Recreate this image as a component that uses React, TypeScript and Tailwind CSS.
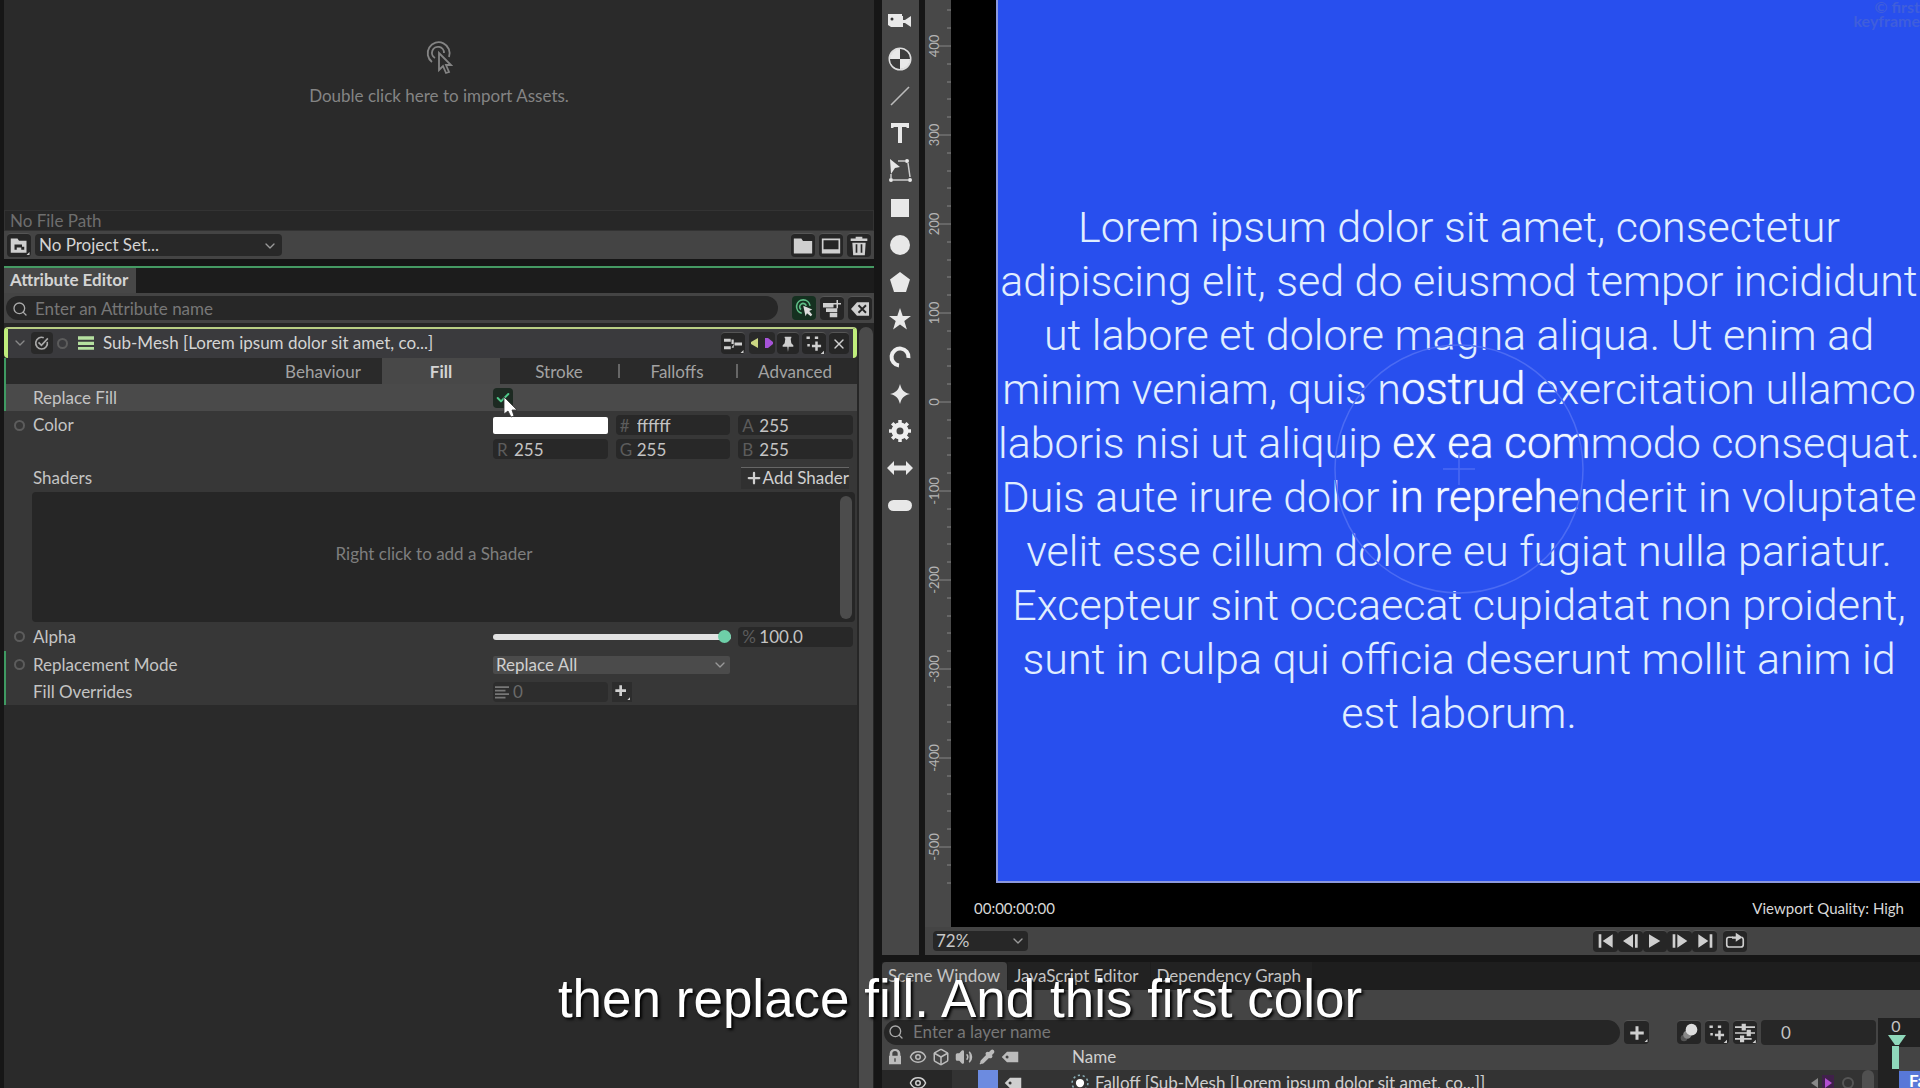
import type { ReactNode } from "react";
import { ChevronDown, Eye, Box, Volume2, Pipette, X, Plus, Search, Check } from "lucide-react";

const TABS = ["Behaviour", "Fill", "Stroke", "Falloffs", "Advanced"];

const SCENE_TABS = ["Scene Window", "JavaScript Editor", "Dependency Graph"];

const RULER_LABELS = [400, 300, 200, 100, 0, -100, -200, -300, -400, -500];

const TOOLS: { name: string; icon: ReactNode }[] = [
  { name: "Camera", icon: <><path d="M0 6V4h14v2h1v11H3l-3-2z" /><path d="M15 10h2l6-4v11l-6-4h-2z" /><circle cx="4" cy="9" r="1.500" fill="#333" /></> },
  { name: "Null", icon: <><circle cx="12" cy="12" r="10.5" fill="#555" stroke="#ddd" strokeWidth="2" /><path d="M12 12h10a10 10 0 0 0-10-10zM12 12H2a10 10 0 0 0 10 10z" fill="#3c3c3c" /><path d="M12 12V2A10 10 0 0 0 2 12zM12 12v10a10 10 0 0 0 10-10z" /></> },
  { name: "Line", icon: <path d="M3 21 21 3" stroke="#bbb" strokeWidth="1.6" /> },
  { name: "Text", icon: <path d="M3 2h18v5h-2l-1-1h-4v16h-4V6H6L5 7H3z" /> },
  { name: "Edit Points", icon: <><path d="m2 1 10 8-5 1-4 6z" /><path d="M10 3h7M20 5l2 14M5 22h15M3 20v-4" stroke="#ccc" strokeWidth="1.5" fill="none" /><circle cx="19" cy="3" r="2" /><circle cx="22" cy="22" r="2" /><circle cx="3" cy="22" r="2" /></> },
  { name: "Rectangle", icon: <path d="M3 3h18v18H3z" /> },
  { name: "Ellipse", icon: <circle cx="12" cy="12" r="10" /> },
  { name: "Polygon", icon: <path d="m12 2 10 7.500-4 12.500H6L2 9.500z" /> },
  { name: "Star", icon: <path d="m12 1 2.700 8H23l-6.700 5 2.600 8.500L12 17.400 5.100 22.500 7.700 14 1 9h8.300z" /> },
  { name: "Arc", icon: <path d="M20.500 13A8.500 8.500 0 1 0 11 20.500" fill="none" stroke="#eee" strokeWidth="4" /> },
  { name: "Super Ellipse", icon: <path d="M12 2c1.500 6 4 8.500 10 10-6 1.500-8.500 4-10 10-1.500-6-4-8.500-10-10 6-1.500 8.500-4 10-10z" /> },
  { name: "Cogwheel", icon: <><circle cx="12" cy="12" r="6" fill="none" stroke="#eee" strokeWidth="5" /><path d="M12 1v4M12 19v4M1 12h4M19 12h4M4.200 4.200 7 7M17 17l2.800 2.800M4.200 19.800 7 17M17 7l2.800-2.800" stroke="#eee" strokeWidth="3.500" /></> },
  { name: "Arrow", icon: <path d="m-1 12 7-7v4.500h12V5l7 7-7 7v-4.500H6V19z" /> },
  { name: "Capsule", icon: <rect x="0" y="7" width="24" height="11" rx="5.500" /> },
];

function IconButton({ label, children, className = "w-6 h-6" }: { label: string; children: ReactNode; className?: string }) {
  return (
    <button aria-label={label} className={`flex items-center justify-center shrink-0 rounded-sm border-t border-[#555] bg-[#262626] text-[#cfcfcf] ${className}`}>
      {children}
    </button>
  );
}

function Glyph({ children, className = "w-5 h-5" }: { children: ReactNode; className?: string }) {
  return (
    <svg viewBox="0 0 24 24" className={`overflow-visible ${className}`} fill="currentColor">
      {children}
    </svg>
  );
}

function Tag() {
  return (
    <Glyph className="w-[18px] h-[18px]">
      <path fillRule="evenodd" d="M8 5h15v14H8l-7-7zM8 10a2 2 0 1 0 .1 4 2 2 0 0 0 0-4z" />
    </Glyph>
  );
}

function Pattern() {
  return (
    <Glyph>
      <rect x="3" y="3" width="4" height="3" /><rect x="13" y="3" width="4" height="3" /><rect x="4" y="12" width="3" height="3" />
      <path d="M13.500 9h3v4h4v3h-4v4h-3v-4h-4v-3h4zM24 20v4h-4z" />
    </Glyph>
  );
}

function NumberField({ prefix, value, id }: { prefix: string; value: string; id: string }) {
  return (
    <div className="flex items-center h-5 bg-[#282828] rounded-sm pl-1 pt-px">
      <label htmlFor={id} className="w-[17px] shrink-0 text-[#5c5c5c]">{prefix}</label>
      <input id={id} defaultValue={value} className="w-full min-w-0 bg-transparent outline-none text-[#c4c4c4]" />
    </div>
  );
}

function Row({ label, keyable, edited, active, className = "h-[27px]", htmlFor, children }: {
  label: string; keyable?: boolean; edited?: boolean; active?: boolean; className?: string; htmlFor?: string; children?: ReactNode;
}) {
  return (
    <div className={`flex items-center border-l-2 pr-1 ${edited ? "border-[#3f9a62]" : "border-transparent"} ${active ? "bg-[#4a4a4a]" : ""} ${className}`}>
      <div className="flex items-center w-[27px] pl-2 shrink-0">
        {keyable && <span className="w-[11px] h-[11px] rounded-full border-2 border-[#5c5c5c]" />}
      </div>
      <label htmlFor={htmlFor} className="flex-1 text-[#c4c4c4]">{label}</label>
      <div className="w-[360px]">{children}</div>
    </div>
  );
}

function AssetsPanel() {
  return (
    <section className="bg-[#444] h-[259px] flex flex-col">
      <div className="flex-1 bg-[#2a2a2a] flex flex-col items-center text-[#848484] pt-10">
        <svg viewBox="0 0 28 36" className="w-7 h-9" fill="none" stroke="currentColor" strokeWidth="1.800">
          <path d="M7 22A11 11 0 1 1 24 17" />
          <path d="M10 18a6 6 0 1 1 9-5" />
          <path d="M14 13v17l4-4 3 7 3-1-3-7h5z" fill="#2a2a2a" />
        </svg>
        <p className="mt-2.5">Double click here to import Assets.</p>
      </div>
      <div className="h-[21px] bg-[#272727] border border-[#333] px-[5px] flex items-center text-[#6e6e6e]">No File Path</div>
      <div className="h-7 flex items-center pl-[3px] pr-[3px]">
        <IconButton label="Set project">
          <Glyph className="w-[18px] h-[18px]">
            <path fillRule="evenodd" d="M1 2h9l2 3h10v16H1zM6 10v7h3v-3h6v3h4v-4h-3v-3z" /><path d="M26 20v4h-4z" />
          </Glyph>
        </IconButton>
        <div className="relative ml-1 w-[247px]">
          <select aria-label="Project" className="w-full h-[22px] appearance-none bg-[#282828] rounded-sm pl-1 outline-none text-[#d4d4d4]">
            <option>No Project Set...</option>
          </select>
          <ChevronDown className="absolute right-1 top-1 w-4 h-4 text-[#999] pointer-events-none" />
        </div>
        <div className="ml-auto flex gap-1">
          <IconButton label="New folder"><Glyph><path d="M1 3h9l2 3h11v15H1z" /></Glyph></IconButton>
          <IconButton label="New composition"><Glyph><path fillRule="evenodd" d="M1 3h22v18H1zM3 5v11h18V5z" /></Glyph></IconButton>
          <IconButton label="Delete"><Glyph><path fillRule="evenodd" d="M8 1h8v2h6v3H2V3h6zM4 8h16l-1 15H5zM8 10v10h2V10zm6 0v10h2V10z" /></Glyph></IconButton>
        </div>
      </div>
    </section>
  );
}

function AttributeEditor() {
  return (
    <section className="flex-1 flex flex-col bg-[#2a2a2a]">
      <div className="h-[27px] border-t-2 border-[#459a63] bg-[#1c1c1c] flex">
        <h2 className="bg-[#474747] text-[#d4d4d4] pl-1.5 pr-2 pb-px flex items-center font-bold">Attribute Editor</h2>
      </div>
      <div className="h-[30px] bg-[#444] flex items-center gap-1 px-0.5">
        <label className="flex-1 h-6 rounded-full bg-[#272727] flex items-center gap-[7px] pl-1.5 mr-2.5 pt-px">
          <Search className="w-4 h-4 text-[#aaa] shrink-0" />
          <input placeholder="Enter an Attribute name" className="flex-1 bg-transparent outline-none placeholder:text-[#777]" />
        </label>
        <button aria-label="Auto select" className="w-6 h-6 rounded-sm bg-[#153020] flex items-center justify-center text-[#5fbf87]">
          <Glyph className="w-[18px] h-[18px]">
            <path d="M9 19A9 9 0 1 1 20 9M8 14a4.500 4.500 0 1 1 7-5" fill="none" stroke="currentColor" strokeWidth="2.200" />
            <path d="m11 9 12 5-4 2 4 5-2 2-5-4-2 4z" fill="#ddd" />
          </Glyph>
        </button>
        <IconButton label="Add to list">
          <Glyph className="w-[18px] h-[18px]"><path d="M0 4h14v6H0zM4 11h15v5H4zM9 17h10v6H9zM18 0h2v4h4v2h-4v5h-2V6h-4V4h4z" /></Glyph>
        </IconButton>
        <IconButton label="Clear">
          <Glyph className="w-[18px] h-[18px]"><path d="M8 3h16v18H8l-8-9z" /><path d="m10 7 10 10M20 7 10 17" stroke="#262626" strokeWidth="2.500" /></Glyph>
        </IconButton>
      </div>

      <div className="flex-1 flex pt-1 bg-[#262626]">
        <div className="flex-1 flex flex-col bg-[#2a2a2a]">
          {/* Layer header */}
          <div className="h-[31px] border-t-2 border-t-[#b9cf85] border-x-4 border-x-[#c0ee7c] bg-[#3a3a3d] rounded-sm flex items-center pl-1 pb-px">
            <ChevronDown className="w-4 h-4 text-[#888]" />
            <button aria-label="Enabled" className="w-[22px] h-[22px] ml-[3px] bg-[#292929] rounded-sm flex items-center justify-center text-[#aaa]">
              <Glyph className="w-3.5 h-3.5">
                <path d="M21 10a10 10 0 1 1-6-7M6 11l5 5L22 4" fill="none" stroke="currentColor" strokeWidth="2.800" />
              </Glyph>
            </button>
            <span className="w-[11px] h-[11px] rounded-full border-2 border-[#5c5c5c] ml-1" />
            <Glyph className="w-4 h-4 ml-2.5 text-[#b5e0a0]">
              <path d="M0 2h24v5H0zM0 10h24v5H0zM0 18h24v4H0z" />
            </Glyph>
            <h3 className="ml-[9px] flex-1 text-[#d4d4d4]">Sub-Mesh [Lorem ipsum dolor sit amet, co...]</h3>
            <IconButton label="Connections" className="w-6 h-[22px]">
              <Glyph className="w-[18px] h-[18px]"><path d="M0 5h9v4H0zM0 15h9v4H0zM14 10h10v4H14zM10 6h3v6h-3M10 17h3v-5" /><path d="M26 20v4h-4z" /></Glyph>
            </IconButton>
            <button aria-label="Keyframe navigation" className="ml-1 mr-0.5 w-[26px] h-[22px] bg-[#292929] rounded-sm flex items-center justify-center">
              <svg viewBox="0 0 24 12" className="w-6 h-3">
                <path d="M8 1v10L1 7V5z" fill="#cbd682" /><path d="M15 1v10h3l5-4V5l-5-4z" fill="#a653d8" />
              </svg>
            </button>
            <IconButton label="Pin" className="w-[22px] h-[22px]">
              <Glyph className="w-4 h-4"><path d="M7 1h10v2l-1 1 1 7 3 3v2h-7l-1 8-1-8H4v-2l3-3 1-7-1-1z" /></Glyph>
            </IconButton>
            <IconButton label="Presets" className="w-6 h-[22px] ml-[3px]"><Pattern /></IconButton>
            <IconButton label="Close" className="w-5 h-[22px] ml-[3px] mr-1"><X className="w-4 h-4" /></IconButton>
          </div>

          <nav className="h-[26px] border-l-2 border-[#3f9a62] flex justify-end pr-[3px]">
            {TABS.map((tab) => (
              <button
                key={tab}
                className={`w-[118px] pt-px ${tab === "Fill" ? "bg-[#484848] text-[#d4d4d4] font-bold" : "text-[#a2a2a2]"} ${tab === "Falloffs" || tab === "Advanced" ? "relative before:absolute before:left-0 before:top-1.5 before:h-3.5 before:w-0.5 before:bg-[#666]" : ""}`}
              >
                {tab}
              </button>
            ))}
          </nav>

          {/* Attributes */}
          <div className="bg-[#373737]">
            <Row label="Replace Fill" htmlFor="replace-fill" edited active>
              <div className="relative w-5 h-5">
                <input id="replace-fill" type="checkbox" defaultChecked className="block appearance-none w-5 h-5 rounded-sm bg-[#1d2a22]" />
                <Check className="absolute left-0.5 top-0.5 w-4 h-4 text-[#4fc98a] pointer-events-none" strokeWidth={3} />
                <svg viewBox="0 0 14 22" className="absolute left-2.5 top-2 w-3.5 h-[22px]">
                  <path d="M1 1v17l4-3 3 6 3-1-2-6h5z" fill="#fff" stroke="#333" strokeWidth="0.800" />
                </svg>
              </div>
            </Row>
            <Row label="Color" htmlFor="hex" keyable className="h-[28px]">
              <div className="grid grid-cols-3 gap-x-2 items-center">
                <button aria-label="Color swatch" className="h-[17px] rounded-xs bg-white" />
                <NumberField id="hex" prefix="#" value="ffffff" />
                <NumberField id="alpha-channel" prefix="A" value="255" />
              </div>
            </Row>
            <div className="h-[24px] flex justify-end pr-1">
              <div className="w-[360px] grid grid-cols-3 gap-x-2">
                <NumberField id="red" prefix="R" value="255" />
                <NumberField id="green" prefix="G" value="255" />
                <NumberField id="blue" prefix="B" value="255" />
              </div>
            </div>
            <Row label="Shaders" className="h-[29px]">
              <button className="ml-auto mr-1 h-[22px] flex items-center border-t border-[#666] bg-[#303030] pl-1 text-[#d0d0d0]">
                <Plus className="w-[18px] h-[18px]" strokeWidth={3} />
                <span>Add Shader</span>
              </button>
            </Row>
            <div className="ml-7 mr-0.5 h-[130px] bg-[#262626] rounded-sm flex items-center pr-[3px]">
              <p className="flex-1 text-center text-[#7e7e7e] -mt-1.5 pr-1">Right click to add a Shader</p>
              <div className="w-3 h-[123px] rounded-full bg-[#4c4c4c]" />
            </div>
            <Row label="Alpha" htmlFor="alpha" keyable className="h-[29px]">
              <div className="grid grid-cols-3 gap-x-2 items-center">
                <input
                  id="alpha"
                  type="range"
                  defaultValue={100}
                  className="col-span-2 w-[238px] h-1.5 appearance-none rounded-full bg-[#e2e2e2] [&::-webkit-slider-thumb]:appearance-none [&::-webkit-slider-thumb]:w-[13px] [&::-webkit-slider-thumb]:h-[13px] [&::-webkit-slider-thumb]:rounded-full [&::-webkit-slider-thumb]:bg-[#6ecfa8]"
                />
                <NumberField id="alpha-value" prefix="%" value="100.0" />
              </div>
            </Row>
            <Row label="Replacement Mode" htmlFor="mode" keyable edited>
              <div className="relative w-[237px]">
                <select id="mode" className="block w-full h-[18px] appearance-none bg-[#4b4b4b] rounded-xs pl-[3px] outline-none text-[#d0d0d0] leading-[18px]">
                  <option>Replace All</option>
                </select>
                <ChevronDown className="absolute right-0.5 top-px w-4 h-4 text-[#999] pointer-events-none" />
              </div>
            </Row>
            <Row label="Fill Overrides" htmlFor="overrides" edited>
              <div className="flex items-center gap-1">
                <div className="flex items-center w-[115px] h-5 bg-[#2d2d2d] rounded-sm pl-0.5">
                  <Glyph className="w-3.5 h-3.5 text-[#777] mr-1 shrink-0"><path d="M0 2h24v3H0zM0 8h18v3H0zM0 14h24v3H0zM0 20h18v3H0z" /></Glyph>
                  <input id="overrides" defaultValue="0" className="w-full min-w-0 bg-transparent outline-none text-[#6a6a6a]" />
                </div>
                <button aria-label="Add override" className="w-5 h-5 bg-[#2d2d2d] text-[#d0d0d0] flex items-center justify-center">
                  <Glyph className="w-4 h-4"><path d="M8 2h4v6h6v4h-6v6H8v-6H2V8h6zM24 20v4h-4z" /></Glyph>
                </button>
              </div>
            </Row>
          </div>
        </div>
        <div className="w-[17px] flex justify-center">
          <div className="w-3.5 rounded-t-full bg-[#4a4a4a]" />
        </div>
      </div>
    </section>
  );
}

function Ruler() {
  return (
    <svg className="w-[26px] h-full bg-[#484848] shrink-0" aria-label="Vertical ruler">
      {RULER_LABELS.map((label, i) => {
        const y = 46 + i * 89;
        return (
          <g key={label} stroke="#858585">
            <path d={`M14 ${y}h12`} />
            {[-2, -1, 1, 2].map((n) => <path key={n} d={`M22 ${y + Math.round(n * 17.8)}h4`} />)}
            <text transform={`translate(14 ${y}) rotate(-90)`} textAnchor="middle" stroke="none" fill="#b4b4b4" className="text-[13px]">{label}</text>
          </g>
        );
      })}
    </svg>
  );
}

// Letters inside the falloff radius are drawn larger and heavier
function Grown({ children }: { children: ReactNode }) {
  return <span className="text-[44px] leading-[54px] text-[#f2f8ff] [text-shadow:0_0_1px_#f2f8ff]">{children}</span>;
}

function Viewport() {
  return (
    <div className="flex-1 min-w-0 relative bg-black flex flex-col pl-[45px]">
      <div className="h-[883px] border-l-2 border-b-2 border-[#8b98dd] bg-[#284fee] relative pt-[200px] overflow-hidden">
        <div className="text-center whitespace-nowrap font-['Roboto',sans-serif] font-light text-[43px] leading-[54px] text-[#e0eeff] flex flex-col items-center">
          <p>Lorem ipsum dolor sit amet, consectetur</p>
          <p>adipiscing elit, sed do eiusmod tempor incididunt</p>
          <p>ut labore et dolore magna aliqua. Ut enim ad</p>
          <p>minim veniam, quis n<Grown>ostrud</Grown> exercitation ullamco</p>
          <p>laboris nisi ut aliquip <Grown>ex ea com</Grown>modo consequat.</p>
          <p>Duis aute irure dolor <Grown>in repreh</Grown>enderit in voluptate</p>
          <p>velit esse cillum dolore eu fugiat nulla pariatur.</p>
          <p>Excepteur sint occaecat cupidatat non proident,</p>
          <p>sunt in culpa qui officia deserunt mollit anim id</p>
          <p>est laborum.</p>
        </div>
        {/* Falloff gizmo */}
        <svg viewBox="0 0 250 250" className="absolute left-1/2 top-[344px] -translate-x-1/2 w-[250px] h-[250px]" fill="none" stroke="#4b6bf3" strokeWidth="1.500">
          <circle cx="125" cy="125" r="124" />
          <path d="M109 125h32M125 109v32" />
        </svg>
        <p className="absolute right-0 top-0 text-right text-[16px] leading-[14px] font-bold text-[#3f5edc]">© first<br />keyframe</p>
      </div>
      <div className="flex-1 flex items-center justify-between pr-4 pt-1.5 -ml-[22px] text-[15px] text-[#d8d8d8]">
        <span>00:00:00:00</span>
        <span>Viewport Quality: High</span>
      </div>
    </div>
  );
}

function TransportBar() {
  return (
    <div className="h-7 bg-[#444] flex items-center pl-2 pb-px">
      <div className="relative w-[95px]">
        <select aria-label="Zoom" className="w-full h-5 appearance-none bg-[#272727] rounded-sm pl-[3px] outline-none text-[#c8c8c8]">
          <option>72%</option>
        </select>
        <ChevronDown className="absolute right-0.5 top-0.5 w-4 h-4 text-[#999] pointer-events-none" />
      </div>
      <div className="ml-auto mr-[173px] flex">
        <IconButton label="Go to start" className="w-[25px] h-[22px]"><Glyph className="w-4 h-4"><path d="M1 2h4v20H1zM22 2v20L7 12z" /></Glyph></IconButton>
        <IconButton label="Previous frame" className="w-[25px] h-[22px]"><Glyph className="w-4 h-4"><path d="M15 2v20L0 12zM18 2h4v20h-4z" /></Glyph></IconButton>
        <IconButton label="Play" className="w-6 h-[22px]"><Glyph className="w-4 h-4"><path d="M3 2v20l17-10z" /></Glyph></IconButton>
        <IconButton label="Next frame" className="w-[25px] h-[22px]"><Glyph className="w-4 h-4"><path d="M1 2h4v20H1zM8 2v20l15-10z" /></Glyph></IconButton>
        <IconButton label="Go to end" className="w-[25px] h-[22px]"><Glyph className="w-4 h-4"><path d="M2 2v20l15-10zM19 2h4v20h-4z" /></Glyph></IconButton>
        <IconButton label="Loop" className="w-6 h-[22px] ml-1.5">
          <Glyph className="w-[18px] h-[18px]"><path d="M9 7H4q-3 0-3 3v7q0 3 3 3h16q3 0 3-3v-7q0-2-2-3" fill="none" stroke="currentColor" strokeWidth="2.200" /><path d="M8 6h5V1l9 6-9 6V9H8z" /></Glyph>
        </IconButton>
      </div>
    </div>
  );
}

function ScenePanel() {
  return (
    <section className="h-[126px] shrink-0 flex flex-col bg-[#444] overflow-hidden">
      <div className="h-7 bg-[#1e1e1e] flex gap-px shrink-0">
        {SCENE_TABS.map((tab, i) => (
          <button key={tab} className={`pl-1.5 ${i === 0 ? "pr-[7px] bg-[#444] rounded-t-sm" : "pr-[11px] bg-[#222]"} text-[#c4c4c4]`}>{tab}</button>
        ))}
      </div>
      <div className="h-[98px] flex pt-7 shrink-0">
        <div className="flex-1 flex flex-col">
          <div className="h-[26px] flex items-center pl-0.5 pr-0.5 shrink-0 pt-0.5">
            <label className="flex-1 h-[25px] rounded-full bg-[#262626] flex items-center gap-[9px] pl-1">
              <Search className="w-4 h-4 text-[#aaa]" />
              <input placeholder="Enter a layer name" className="flex-1 bg-transparent outline-none placeholder:text-[#777]" />
            </label>
            <IconButton label="Add layer" className="w-[25px] h-6 ml-1 mr-[28px]">
              <Glyph className="w-[18px] h-[18px]"><path d="M10 3h4v7h7v4h-7v7h-4v-7H3v-4h7zM26 20v4h-4z" /></Glyph>
            </IconButton>
            <div className="flex gap-1">
              <IconButton label="Motion blur">
                <Glyph><circle cx="6" cy="18" r="4" fill="#555" /><circle cx="10" cy="14" r="5" fill="#888" /><circle cx="15" cy="8" r="7" fill="#ddd" /></Glyph>
              </IconButton>
              <IconButton label="Presets"><Pattern /></IconButton>
              <IconButton label="Filters">
                <Glyph><path d="M0 4h24v2H0zM0 11h24v2H0zM0 18h20v2H0zM8 1h5v8H8zM14 8h5v8h-5zM6 15h5v8H6zM25 20v4h-4z" /></Glyph>
              </IconButton>
            </div>
            <input aria-label="Frame" defaultValue="0" className="w-[115px] h-[25px] bg-[#272727] rounded-sm ml-1 pl-5 outline-none text-[#c4c4c4]" />
          </div>
          <div className="h-[26px] shrink-0 flex items-center pl-1 gap-[5px] text-[#bcbcbc]">
            <Glyph className="w-[18px] h-4"><path fillRule="evenodd" d="M4 10V7a8 7 0 0 1 16 0v3h1v13H3V10zM8 10h8V7a4 4 0 0 0-8 0zM11 14v5h2v-5z" /></Glyph>
            <Eye className="w-[18px] h-[18px]" />
            <Box className="w-[18px] h-[18px]" />
            <Volume2 className="w-[18px] h-[18px]" fill="currentColor" />
            <Pipette className="w-[18px] h-4" fill="currentColor" />
            <Tag />
            <span className="ml-12 text-[#d0d0d0]">Name</span>
          </div>
          <div className="h-[25px] shrink-0 flex items-center bg-[#333] text-[#cfcfcf]">
            <div className="w-[70px] h-full bg-[#272727] flex items-center pl-[27px]"><Eye className="w-[18px] h-[18px]" /></div>
            <span className="ml-[26px] w-5 h-full bg-[#6c8be0]" />
            <span className="ml-1.5"><Tag /></span>
            <Glyph className="w-[18px] h-[18px] ml-[49px] text-white">
              <circle cx="12" cy="12" r="5.500" /><circle cx="12" cy="12" r="10.500" fill="none" stroke="#8ab0b8" strokeWidth="2" strokeDasharray="3 3.600" />
            </Glyph>
            <span className="ml-1.5 flex-1">Falloff [Sub-Mesh [Lorem ipsum dolor sit amet, co...]]</span>
            <svg viewBox="0 0 26 16" className="w-[26px] h-4">
              <path d="M8 3v10L1 8z" fill="#888" /><path d="M12 0h12v16H12z" fill="#40204a" /><path d="M15 3v10l7-5z" fill="#b24fd0" />
            </svg>
            <span className="w-3 h-3 rounded-full border-2 border-[#555] ml-1.5" />
            <span className="w-3 h-full rounded-t-md bg-[#505050] ml-2 mr-1" />
          </div>
        </div>
        {/* Timeline */}
        <div className="w-[42px] bg-[#222] flex">
          <div className="w-[21px] shrink-0" />
          <div className="flex-1 relative pt-[29px]">
            <div className="h-6 bg-[#444]" />
            <div className="h-7 bg-[#5878d8] text-white font-bold pl-2.5 overflow-hidden whitespace-nowrap">Falloff</div>
            <svg viewBox="0 0 18 56" className="absolute -left-[11px] top-0 w-[18px] h-14">
              <text x="8" y="14" textAnchor="middle" fill="#c4c4c4" className="text-[16px]">0</text>
              <path d="M0 17h18l-7 10H7z" fill="#8fd8bb" /><path d="M4 28h7v23H4z" fill="#8fd8bb" />
            </svg>
          </div>
        </div>
      </div>
    </section>
  );
}

export default function App() {
  return (
    <div className="relative h-screen overflow-hidden bg-[#161616] font-['Lato',sans-serif] text-[17px] leading-5 grid grid-cols-[882fr_1038fr]">
      <div className="flex flex-col gap-[7px] pl-1 pr-2">
        <AssetsPanel />
        <AttributeEditor />
      </div>

      <div className="flex flex-col gap-[7px] min-w-0">
        <div className="flex-1 min-h-0 flex gap-1.5">
          <div className="w-[37px] bg-[#474747] pt-[3px]">
            <div className="h-[521px] flex flex-col">
              {TOOLS.map((tool) => (
                <button key={tool.name} aria-label={tool.name} className="flex-1 flex items-center justify-center pr-px text-[#e8e8e8]">
                  <Glyph className="w-6 h-6">{tool.icon}</Glyph>
                </button>
              ))}
            </div>
          </div>
          <div className="flex-1 min-w-0 flex flex-col">
            <div className="flex-1 min-h-0 flex">
              <Ruler />
              <Viewport />
            </div>
            <TransportBar />
          </div>
        </div>
        <ScenePanel />
      </div>

      {/* Subtitle */}
      <p className="absolute inset-x-0 bottom-[59px] text-center font-['Liberation_Sans',sans-serif] text-[53px] leading-[60px] text-white [text-shadow:2px_2px_3px_#000] pointer-events-none">
        then replace fill. And this first color
      </p>
    </div>
  );
}
